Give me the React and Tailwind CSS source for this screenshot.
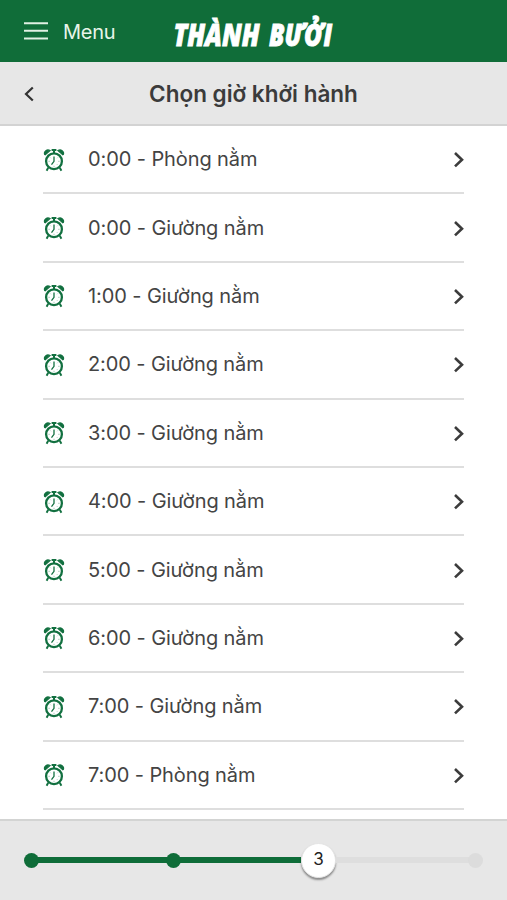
const departures = [
  { time: '0:00', type: 'Phòng nằm' },
  { time: '0:00', type: 'Giường nằm' },
  { time: '1:00', type: 'Giường nằm' },
  { time: '2:00', type: 'Giường nằm' },
  { time: '3:00', type: 'Giường nằm' },
  { time: '4:00', type: 'Giường nằm' },
  { time: '5:00', type: 'Giường nằm' },
  { time: '6:00', type: 'Giường nằm' },
  { time: '7:00', type: 'Giường nằm' },
  { time: '7:00', type: 'Phòng nằm' },
];

function AlarmIcon() {
  return (
    <svg viewBox="0 0 22 24" className="w-[22px] h-6 mt-px shrink-0" fill="none" stroke="#127040">
      <circle cx="11" cy="13.2" r="7.9" strokeWidth="2.3" />
      <path d="M1.6 6.4C.6 3.2 4.2.9 7 2.6L2.2 6.7ZM20.4 6.4C21.4 3.2 17.8.9 15 2.6l4.8 4.1Z" fill="#127040" strokeWidth="1.2" />
      <path d="M8.6 2h4.8M11 2v3.5" strokeWidth="2" />
      <path d="M5.2 19.8 3.6 22.8M16.8 19.8l1.6 3" strokeWidth="1.9" />
      <path d="M11 8.4v5l-2.5 3.2" strokeWidth="1.3" />
      <path d="M5.5 13.3h1.2M15.3 13.3h1.2M11 17.8v1M7.3 9.6l.6.6M14.7 9.6l-.6.6M14.7 17l-.6-.6" strokeWidth=".9" opacity=".5" />
    </svg>
  );
}

function Logo() {
  return (
    <div className="flex font-['Open_Sans',sans-serif] font-extrabold italic">
      <svg viewBox="0 0 94 62" className="w-[94px] h-[62px] overflow-visible" fill="#fff" stroke="#fff" strokeWidth=".9">
        <text transform="translate(1.5 45.5) scale(.8 1)" fontSize="30" textLength="107.5" lengthAdjust="spacingAndGlyphs">THÀNH</text>
      </svg>
      <svg viewBox="0 0 70 62" className="w-[70px] h-[62px] overflow-visible" fill="#fff" stroke="#fff" strokeWidth=".9">
        <text transform="translate(3 45.5) scale(.8 1)" fontSize="30" textLength="79" lengthAdjust="spacingAndGlyphs">BƯỞI</text>
      </svg>
    </div>
  );
}

function DepartureRow({ time, type }) {
  return (
    <li className="h-[68.4px] shrink-0 border-b-2 border-[#dedede] flex items-center text-[20px] tracking-[-0.1px] text-[#444]">
      <AlarmIcon />
      <span className="ml-[23px] whitespace-nowrap">{time} - {type}</span>
      <svg viewBox="0 0 12 18" className="ml-auto w-3 h-[18px]" fill="none" stroke="#3c3c3c" strokeWidth="2.6">
        <path d="m3 3 7 6.7-7 6.7" />
      </svg>
    </li>
  );
}

function Progress() {
  return (
    <footer className="h-[81px] shrink-0 border-t-2 border-[#d3d4d3] bg-[#e7e7e7] px-6 flex items-center">
      <div className="w-full flex items-center -mt-px">
        <span className="w-[15px] h-[15px] rounded-full bg-[#0f6d39]" />
        <span className="w-[129px] h-1.5 bg-[#0f6d39] -mx-px" />
        <span className="w-[15px] h-[15px] rounded-full bg-[#0f6d39]" />
        <span className="w-[121px] h-1.5 bg-[#0f6d39] -ml-px" />
        <span className="w-[35px] h-[35px] rounded-full bg-white border border-[#e5e5e5] shadow-[0_2px_2px_rgba(0,0,0,0.4)] flex items-center justify-center text-[17px] text-[#222]">
          3
        </span>
        <span className="flex-1 h-1.5 bg-[#dedede] -mr-px" />
        <span className="w-[15px] h-[15px] rounded-full bg-[#dcdcdc]" />
      </div>
    </footer>
  );
}

export default function App() {
  return (
    <div className="h-[900px] w-[507px] overflow-hidden flex flex-col bg-white font-['Inter',sans-serif]">
      <header className="h-[62px] shrink-0 bg-[#106d39] grid grid-cols-[172px_1fr] items-center">
        <button type="button" className="flex items-center pl-6 gap-[15px] text-[20px] tracking-[-0.3px] text-[#e8f5e9]">
          <svg viewBox="0 0 24 18" className="w-6 h-[18px]" stroke="#e1f1e4" strokeWidth="2">
            <path d="M0 1.2h24M0 8.8h24M0 16.6h24" />
          </svg>
          <span className="pt-0.5">Menu</span>
        </button>
        <Logo />
      </header>

      <div className="h-16 shrink-0 bg-[#e7e7e7] border-b-2 border-[#d3d3d3] grid grid-cols-[80px_1fr_80px] items-center">
        <button type="button" className="pl-6 pt-px">
          <svg viewBox="0 0 12 16" className="w-3 h-4" fill="none" stroke="#333" strokeWidth="2.2">
            <path d="M8.8 1.5 2 8l6.8 6.5" />
          </svg>
        </button>
        <h1 className="text-center text-[22.5px] font-semibold text-[#3b3b3b] whitespace-nowrap pt-px">Chọn giờ khởi hành</h1>
      </div>

      <ul className="flex-1 min-h-0 overflow-hidden px-[43px]">
        {departures.map((item, i) => (
          <DepartureRow key={i} {...item} />
        ))}
      </ul>

      <Progress />
    </div>
  );
}
